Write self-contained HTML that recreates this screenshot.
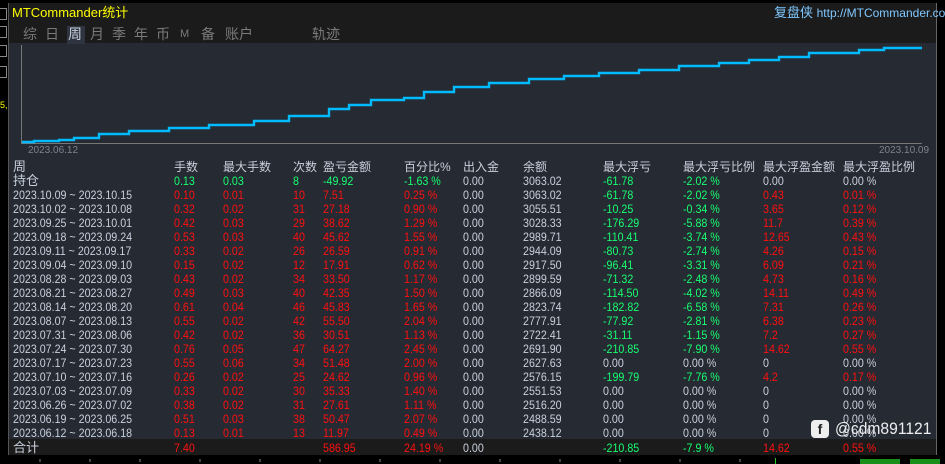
<!DOCTYPE html>
<html><head><meta charset="utf-8"><style>
*{margin:0;padding:0;box-sizing:border-box}
body{width:945px;height:464px;background:#000;overflow:hidden;position:relative;font-family:"Liberation Sans","Noto Sans CJK SC",sans-serif;font-size:12px}
#panel{position:absolute;left:8px;top:3px;width:929px;height:452px;background:#252a33;border-left:1px solid #555;border-right:1px solid #666}
#title{position:absolute;left:0;top:0;width:100%;height:40px;background:#1b1b1b}
.abs{position:absolute;white-space:nowrap;line-height:14px}
.row{position:absolute;left:0;width:100%;height:14px}
.row span{position:absolute;top:0;line-height:14px;white-space:nowrap;transform:scaleX(0.89);transform-origin:0 0}
.row.hd span,.row span.cj{transform:none}
.a{left:4px}.b{left:165px}.c{left:214px}.d{left:284px}.e{left:314px}.f{left:395px}.g{left:454px}.h{left:514px}.i{left:594px}.j{left:674px}.k{left:754px}.l{left:834px}
.w{color:#c8d0dc}.r{color:#ff1010}.gr{color:#18ff70}
.tab{color:#7a7a7a;font-size:14px}
</style></head><body>
<div style="position:absolute;left:0;top:8px;width:7px;height:12px;border:1px solid #888;border-left:none"></div>
<div style="position:absolute;left:0;top:26px;width:7px;height:12px;border:1px solid #888;border-left:none"></div>
<div style="position:absolute;left:0;top:45px;width:7px;height:12px;border:1px solid #888;border-left:none"></div>
<div style="position:absolute;left:0;top:66px;width:7px;height:12px;border:1px solid #888;border-left:none"></div>
<div class="abs" style="left:0;top:98px;color:#ff0;font-size:9px;">5,</div>
<div id="panel">
 <div id="title">
  <div class="abs" style="left:3px;top:3px;color:#ffff00;font-size:13px">MTCommander统计</div>
  <div class="abs" style="left:765px;top:3px;color:#7fc8ff;font-size:13px">复盘侠 <span style="font-size:12px">http://MTCommander.com</span></div>
  <div class="abs tab" style="left:14px;top:24px">综</div>
  <div class="abs tab" style="left:36px;top:24px">日</div>
  <div class="abs" style="left:58px;top:23px;width:18px;height:18px;background:#2f3540"></div>
  <div class="abs tab" style="left:59px;top:24px;color:#c8d0dc">周</div>
  <div class="abs tab" style="left:81px;top:24px">月</div>
  <div class="abs tab" style="left:103px;top:24px">季</div>
  <div class="abs tab" style="left:125px;top:24px">年</div>
  <div class="abs tab" style="left:147px;top:24px">币</div>
  <div class="abs tab" style="left:171px;top:24px;font-size:11px">M</div>
  <div class="abs tab" style="left:192px;top:24px">备</div>
  <div class="abs tab" style="left:216px;top:24px">账户</div>
  <div class="abs tab" style="left:303px;top:24px">轨迹</div>
 </div>
 <svg style="position:absolute;left:0;top:0" width="929" height="160">
  <line x1="12.5" y1="42" x2="12.5" y2="140" stroke="#777"/>
  <line x1="12" y1="140.5" x2="913" y2="140.5" stroke="#777"/>
  <polyline fill="none" stroke="#00bcff" stroke-width="2.4" points="13,139 25,139 25,138 50,138 50,137 65,137 65,135 90,135 90,131 120,131 120,128 160,128 160,125 200,125 200,122 245,122 245,118 280,118 280,113 320,113 320,106 340,106 340,102 362,102 362,97 395,97 395,95 415,95 415,89 445,89 445,84 480,84 480,80 520,80 520,76 555,76 555,73 590,73 590,70 630,70 630,67 670,67 670,63 710,63 710,60 740,60 740,57 770,57 770,54 800,54 800,50 850,50 850,47 875,47 875,45 913,45"/>
  <text x="19" y="150" fill="#7d8590" font-size="10" font-family="Liberation Sans">2023.06.12</text>
  <text x="870" y="150" fill="#7d8590" font-size="10" font-family="Liberation Sans">2023.10.09</text>
 </svg>
 <div class="row w hd" style="top:157px"><span class="a" style="font-size:13px">周</span><span class="b">手数</span><span class="c">最大手数</span><span class="d">次数</span><span class="e">盈亏金额</span><span class="f">百分比%</span><span class="g">出入金</span><span class="h">余额</span><span class="i">最大浮亏</span><span class="j">最大浮亏比例</span><span class="k">最大浮盈金额</span><span class="l">最大浮盈比例</span></div>
 <div class="row" style="top:171px"><span class="a w cj" style="font-size:13px">持仓</span><span class="b gr">0.13</span><span class="c gr">0.03</span><span class="d gr">8</span><span class="e gr">-49.92</span><span class="f gr">-1.63 %</span><span class="g w">0.00</span><span class="h w">3063.02</span><span class="i gr">-61.78</span><span class="j gr">-2.02 %</span><span class="k w">0.00</span><span class="l w">0.00 %</span></div>
 <div class="row" style="top:185px"><span class="a w">2023.10.09 ~ 2023.10.15</span><span class="b r">0.10</span><span class="c r">0.01</span><span class="d r">10</span><span class="e r">7.51</span><span class="f r">0.25 %</span><span class="g w">0.00</span><span class="h w">3063.02</span><span class="i gr">-61.78</span><span class="j gr">-2.02 %</span><span class="k r">0.43</span><span class="l r">0.01 %</span></div>
 <div class="row" style="top:199px"><span class="a w">2023.10.02 ~ 2023.10.08</span><span class="b r">0.32</span><span class="c r">0.02</span><span class="d r">31</span><span class="e r">27.18</span><span class="f r">0.90 %</span><span class="g w">0.00</span><span class="h w">3055.51</span><span class="i gr">-10.25</span><span class="j gr">-0.34 %</span><span class="k r">3.65</span><span class="l r">0.12 %</span></div>
 <div class="row" style="top:213px"><span class="a w">2023.09.25 ~ 2023.10.01</span><span class="b r">0.42</span><span class="c r">0.03</span><span class="d r">29</span><span class="e r">38.62</span><span class="f r">1.29 %</span><span class="g w">0.00</span><span class="h w">3028.33</span><span class="i gr">-176.29</span><span class="j gr">-5.88 %</span><span class="k r">11.7</span><span class="l r">0.39 %</span></div>
 <div class="row" style="top:227px"><span class="a w">2023.09.18 ~ 2023.09.24</span><span class="b r">0.53</span><span class="c r">0.03</span><span class="d r">40</span><span class="e r">45.62</span><span class="f r">1.55 %</span><span class="g w">0.00</span><span class="h w">2989.71</span><span class="i gr">-110.41</span><span class="j gr">-3.74 %</span><span class="k r">12.65</span><span class="l r">0.43 %</span></div>
 <div class="row" style="top:241px"><span class="a w">2023.09.11 ~ 2023.09.17</span><span class="b r">0.33</span><span class="c r">0.02</span><span class="d r">26</span><span class="e r">26.59</span><span class="f r">0.91 %</span><span class="g w">0.00</span><span class="h w">2944.09</span><span class="i gr">-80.73</span><span class="j gr">-2.74 %</span><span class="k r">4.26</span><span class="l r">0.15 %</span></div>
 <div class="row" style="top:255px"><span class="a w">2023.09.04 ~ 2023.09.10</span><span class="b r">0.15</span><span class="c r">0.02</span><span class="d r">12</span><span class="e r">17.91</span><span class="f r">0.62 %</span><span class="g w">0.00</span><span class="h w">2917.50</span><span class="i gr">-96.41</span><span class="j gr">-3.31 %</span><span class="k r">6.09</span><span class="l r">0.21 %</span></div>
 <div class="row" style="top:269px"><span class="a w">2023.08.28 ~ 2023.09.03</span><span class="b r">0.43</span><span class="c r">0.02</span><span class="d r">34</span><span class="e r">33.50</span><span class="f r">1.17 %</span><span class="g w">0.00</span><span class="h w">2899.59</span><span class="i gr">-71.32</span><span class="j gr">-2.48 %</span><span class="k r">4.73</span><span class="l r">0.16 %</span></div>
 <div class="row" style="top:283px"><span class="a w">2023.08.21 ~ 2023.08.27</span><span class="b r">0.49</span><span class="c r">0.03</span><span class="d r">40</span><span class="e r">42.35</span><span class="f r">1.50 %</span><span class="g w">0.00</span><span class="h w">2866.09</span><span class="i gr">-114.50</span><span class="j gr">-4.02 %</span><span class="k r">14.11</span><span class="l r">0.49 %</span></div>
 <div class="row" style="top:297px"><span class="a w">2023.08.14 ~ 2023.08.20</span><span class="b r">0.61</span><span class="c r">0.04</span><span class="d r">46</span><span class="e r">45.83</span><span class="f r">1.65 %</span><span class="g w">0.00</span><span class="h w">2823.74</span><span class="i gr">-182.82</span><span class="j gr">-6.58 %</span><span class="k r">7.31</span><span class="l r">0.26 %</span></div>
 <div class="row" style="top:311px"><span class="a w">2023.08.07 ~ 2023.08.13</span><span class="b r">0.55</span><span class="c r">0.02</span><span class="d r">42</span><span class="e r">55.50</span><span class="f r">2.04 %</span><span class="g w">0.00</span><span class="h w">2777.91</span><span class="i gr">-77.92</span><span class="j gr">-2.81 %</span><span class="k r">6.38</span><span class="l r">0.23 %</span></div>
 <div class="row" style="top:325px"><span class="a w">2023.07.31 ~ 2023.08.06</span><span class="b r">0.42</span><span class="c r">0.02</span><span class="d r">36</span><span class="e r">30.51</span><span class="f r">1.13 %</span><span class="g w">0.00</span><span class="h w">2722.41</span><span class="i gr">-31.11</span><span class="j gr">-1.15 %</span><span class="k r">7.2</span><span class="l r">0.27 %</span></div>
 <div class="row" style="top:339px"><span class="a w">2023.07.24 ~ 2023.07.30</span><span class="b r">0.76</span><span class="c r">0.05</span><span class="d r">47</span><span class="e r">64.27</span><span class="f r">2.45 %</span><span class="g w">0.00</span><span class="h w">2691.90</span><span class="i gr">-210.85</span><span class="j gr">-7.90 %</span><span class="k r">14.62</span><span class="l r">0.55 %</span></div>
 <div class="row" style="top:353px"><span class="a w">2023.07.17 ~ 2023.07.23</span><span class="b r">0.55</span><span class="c r">0.06</span><span class="d r">34</span><span class="e r">51.48</span><span class="f r">2.00 %</span><span class="g w">0.00</span><span class="h w">2627.63</span><span class="i w">0.00</span><span class="j w">0.00 %</span><span class="k w">0</span><span class="l w">0.00 %</span></div>
 <div class="row" style="top:367px"><span class="a w">2023.07.10 ~ 2023.07.16</span><span class="b r">0.26</span><span class="c r">0.02</span><span class="d r">25</span><span class="e r">24.62</span><span class="f r">0.96 %</span><span class="g w">0.00</span><span class="h w">2576.15</span><span class="i gr">-199.79</span><span class="j gr">-7.76 %</span><span class="k r">4.2</span><span class="l r">0.17 %</span></div>
 <div class="row" style="top:381px"><span class="a w">2023.07.03 ~ 2023.07.09</span><span class="b r">0.33</span><span class="c r">0.02</span><span class="d r">30</span><span class="e r">35.33</span><span class="f r">1.40 %</span><span class="g w">0.00</span><span class="h w">2551.53</span><span class="i w">0.00</span><span class="j w">0.00 %</span><span class="k w">0</span><span class="l w">0.00 %</span></div>
 <div class="row" style="top:395px"><span class="a w">2023.06.26 ~ 2023.07.02</span><span class="b r">0.38</span><span class="c r">0.02</span><span class="d r">31</span><span class="e r">27.61</span><span class="f r">1.11 %</span><span class="g w">0.00</span><span class="h w">2516.20</span><span class="i w">0.00</span><span class="j w">0.00 %</span><span class="k w">0</span><span class="l w">0.00 %</span></div>
 <div class="row" style="top:409px"><span class="a w">2023.06.19 ~ 2023.06.25</span><span class="b r">0.51</span><span class="c r">0.03</span><span class="d r">38</span><span class="e r">50.47</span><span class="f r">2.07 %</span><span class="g w">0.00</span><span class="h w">2488.59</span><span class="i w">0.00</span><span class="j w">0.00 %</span><span class="k w">0</span><span class="l w">0.00 %</span></div>
 <div class="row" style="top:423px"><span class="a w">2023.06.12 ~ 2023.06.18</span><span class="b r">0.13</span><span class="c r">0.01</span><span class="d r">13</span><span class="e r">11.97</span><span class="f r">0.49 %</span><span class="g w">0.00</span><span class="h w">2438.12</span><span class="i w">0.00</span><span class="j w">0.00 %</span><span class="k w">0</span><span class="l w">0.00 %</span></div>
 <div style="position:absolute;left:0;top:436px;width:100%;height:16px;background:#1b1b1b"></div>
 <div class="row" style="top:438px"><span class="a w cj" style="font-size:13px">合计</span><span class="b r">7.40</span><span class="e r">586.95</span><span class="f r">24.19 %</span><span class="g w">0.00</span><span class="i gr">-210.85</span><span class="j gr">-7.9 %</span><span class="k r">14.62</span><span class="l r">0.55 %</span></div>
 <div class="abs" style="left:802px;top:417px;width:18px;height:18px;border-radius:4px;background:#eee;color:#222;font-weight:bold;font-size:14px;text-align:center;line-height:18px">f</div>
 <div class="abs" style="left:826px;top:416px;color:#eee;font-size:17px;line-height:20px;transform:scaleX(0.92);transform-origin:0 0">@cdm891121</div>
</div>
<svg style="position:absolute;left:0;top:455px" width="945" height="9">
 <g stroke="#888"><line x1="40" y1="4" x2="40" y2="7"/><line x1="90" y1="4" x2="90" y2="7"/><line x1="140" y1="4" x2="140" y2="7"/><line x1="200" y1="4" x2="200" y2="7"/><line x1="260" y1="4" x2="260" y2="7"/><line x1="320" y1="4" x2="320" y2="7"/><line x1="380" y1="4" x2="380" y2="7"/><line x1="440" y1="4" x2="440" y2="7"/><line x1="500" y1="4" x2="500" y2="7"/><line x1="560" y1="4" x2="560" y2="7"/><line x1="620" y1="4" x2="620" y2="7"/><line x1="680" y1="4" x2="680" y2="7"/><line x1="740" y1="4" x2="740" y2="7"/></g>
 <g fill="#22cc22"><rect x="775" y="3" width="1" height="6"/><rect x="860" y="4" width="40" height="5" opacity="0.7"/><rect x="910" y="4" width="30" height="5" opacity="0.7"/></g>
</svg>
</body></html>
